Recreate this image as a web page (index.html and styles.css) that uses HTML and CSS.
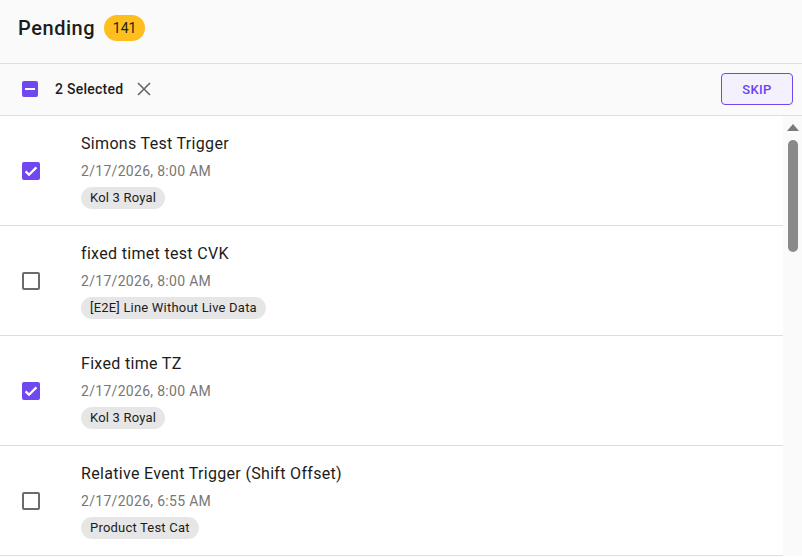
FILE: index.html
```html
<!DOCTYPE html>
<html lang="en">
<head>
    <meta charset="UTF-8">
    <meta name="viewport" content="width=device-width, initial-scale=1.0">
    <title>Pending</title>
    <link rel="stylesheet" href="styles.css">
</head>
<body>
    <div class="header">
        <h2>Pending</h2>
        <span class="badge">141</span>
    </div>

    <div class="toolbar">
        <span class="box box-partial"><span class="dash"></span></span>
        <span class="selected">2 Selected</span>
        <svg class="close" width="14" height="14" viewBox="0 0 14 14">
            <path d="M1 1 L13 13 M13 1 L1 13" stroke="#666" stroke-width="1.6" fill="none"/>
        </svg>
        <button class="skip">SKIP</button>
    </div>

    <div class="list-wrap">
        <div class="list">
            <div class="row">
                <div class="check-col">
                    <span class="box box-checked">
                        <svg width="18" height="18" viewBox="0 0 18 18"><path d="M3.6 9.4 L7 12.8 L14.4 5.4" stroke="#fff" stroke-width="2.2" fill="none"/></svg>
                    </span>
                </div>
                <div class="info">
                    <div class="title">Simons Test Trigger</div>
                    <div class="date">2/17/2026, 8:00 AM</div>
                    <span class="chip">Kol 3 Royal</span>
                </div>
            </div>
            <div class="row">
                <div class="check-col"><span class="box box-empty"></span></div>
                <div class="info">
                    <div class="title">fixed timet test CVK</div>
                    <div class="date">2/17/2026, 8:00 AM</div>
                    <span class="chip">[E2E] Line Without Live Data</span>
                </div>
            </div>
            <div class="row">
                <div class="check-col">
                    <span class="box box-checked">
                        <svg width="18" height="18" viewBox="0 0 18 18"><path d="M3.6 9.4 L7 12.8 L14.4 5.4" stroke="#fff" stroke-width="2.2" fill="none"/></svg>
                    </span>
                </div>
                <div class="info">
                    <div class="title">Fixed time TZ</div>
                    <div class="date">2/17/2026, 8:00 AM</div>
                    <span class="chip">Kol 3 Royal</span>
                </div>
            </div>
            <div class="row">
                <div class="check-col"><span class="box box-empty"></span></div>
                <div class="info">
                    <div class="title">Relative Event Trigger (Shift Offset)</div>
                    <div class="date">2/17/2026, 6:55 AM</div>
                    <span class="chip">Product Test Cat</span>
                </div>
            </div>
        </div>
        <div class="scrollbar">
            <span class="arrow"></span>
            <span class="thumb"></span>
        </div>
    </div>
</body>
</html>
```

FILE: styles.css
```css
body {
    font-family: Roboto, "Liberation Sans", sans-serif;
    margin: 0;
    background: #fff;
    color: #1c1c1c;
    height: 558px;
    overflow: hidden;
}
.header {
    display: flex;
    align-items: center;
    gap: 9px;
    height: 56px;
    padding: 0 0 7px 18px;
    background: #fafafa;
    border-bottom: 1px solid #dedede;
}
.header h2 {
    margin: 0;
    font-size: 20px;
    font-weight: 500;
    letter-spacing: 0.55px;
}
.badge {
    display: inline-flex;
    align-items: center;
    justify-content: center;
    width: 41px;
    height: 26px;
    border-radius: 13px;
    background: #fdbe1e;
    font-size: 14px;
    color: #222;
}
.toolbar {
    display: flex;
    align-items: center;
    height: 51px;
    padding: 0 9px 0 22px;
    background: #fafafa;
    border-bottom: 1px solid #dedede;
}
.box {
    display: inline-flex;
    align-items: center;
    justify-content: center;
    box-sizing: border-box;
    border-radius: 2px;
}
.box-partial {
    width: 16px;
    height: 16px;
    margin-top: -1px;
    background: #7048f0;
}
.dash {
    width: 10px;
    height: 2px;
    background: #fff;
}
.selected {
    margin-left: 17px;
    font-size: 14px;
    font-weight: 500;
    letter-spacing: 0.25px;
    margin-top: -2px;
}
.close {
    margin-left: 14px;
    margin-top: -2px;
}
.skip {
    margin-left: auto;
    width: 72px;
    height: 32px;
    margin-top: -1px;
    border: 1px solid #7048f0;
    border-radius: 4px;
    background: #f4f1fd;
    color: #6a42ee;
    font-family: inherit;
    font-size: 13px;
    font-weight: 500;
    letter-spacing: 0.3px;
    cursor: pointer;
}
.list-wrap {
    display: flex;
}
.list {
    width: 783px;
}
.row {
    display: flex;
    align-items: center;
    height: 109px;
    border-bottom: 1px solid #dedede;
}
.check-col {
    width: 81px;
    padding-left: 22px;
    box-sizing: border-box;
    display: flex;
}
.box-checked {
    width: 18px;
    height: 18px;
    background: #7048f0;
}
.box-empty {
    width: 18px;
    height: 18px;
    border: 2px solid #6b6b6b;
}
.info {
    display: flex;
    flex-direction: column;
    align-items: flex-start;
}
.title {
    font-size: 16px;
    line-height: 24px;
    letter-spacing: 0.32px;
    color: #1c1c1c;
}
.date {
    margin-top: 5px;
    font-size: 14px;
    line-height: 20px;
    letter-spacing: 0.3px;
    color: #777;
}
.chip {
    margin-top: 6px;
    height: 22px;
    line-height: 22px;
    padding: 0 9px;
    border-radius: 11px;
    background: #e6e6e6;
    font-size: 13px;
    letter-spacing: 0.2px;
    color: #1c1c1c;
}
.scrollbar {
    width: 19px;
    display: flex;
    flex-direction: column;
    align-items: center;
    background: #fafafa;
}
.arrow {
    margin-top: 8px;
    width: 0;
    height: 0;
    border-left: 6px solid transparent;
    border-right: 6px solid transparent;
    border-bottom: 7px solid #7a7a7a;
}
.thumb {
    margin-top: 9px;
    width: 10px;
    height: 112px;
    border-radius: 5px;
    background: #8a8a8a;
}
```
